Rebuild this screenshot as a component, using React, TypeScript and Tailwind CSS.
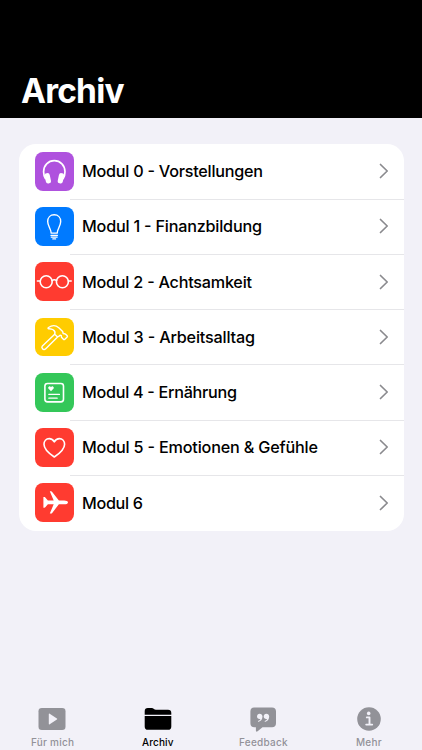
import type { ReactNode } from "react";

type Module = {
  title: string;
  color: string;
  width: string;
  icon: ReactNode;
};

const modules: Module[] = [
  {
    title: "Modul 0 - Vorstellungen",
    color: "bg-[#af52de]",
    width: "181",
    icon: (
      <>
        <path d="M10.4 26.5C9.2 24.7 8.6 22.4 8.6 19.8C8.6 13.3 13.2 8.7 19.3 8.7S30 13.3 30 19.8C30 22.4 29.4 24.7 28.2 26.5" strokeWidth="1.7" />
        <rect x="10.2" y="21.1" width="5.2" height="10.4" rx="2.4" fill="currentColor" stroke="none" transform="rotate(-12 12.8 26.3)" />
        <rect x="23.3" y="21.1" width="5.2" height="10.4" rx="2.4" fill="currentColor" stroke="none" transform="rotate(12 25.9 26.3)" />
      </>
    ),
  },
  {
    title: "Modul 1 - Finanzbildung",
    color: "bg-[#007aff]",
    width: "180",
    icon: (
      <>
        <path d="M16.2 26.1C15.9 21.5 12.7 19.2 12.7 14.5C12.7 10.6 15.4 7.8 19.2 7.8S25.7 10.6 25.7 14.5C25.7 19.2 22.5 21.5 22.2 26.1Z" strokeWidth="1.4" />
        <path d="M15.9 28.3H22.5M16.2 30.1H22.2M17.8 31.9H20.6" strokeWidth="1.2" />
      </>
    ),
  },
  {
    title: "Modul 2 - Achtsamkeit",
    color: "bg-[#ff3b30]",
    width: "170",
    icon: (
      <>
        <circle cx="11.2" cy="19.8" r="6" />
        <circle cx="27.4" cy="19.8" r="6" />
        <path d="M2.4 19H5.2M33.4 19H36.2M17 18.6C18.3 17.7 20.3 17.7 21.6 18.6" />
      </>
    ),
  },
  {
    title: "Modul 3 - Arbeitsalltag",
    color: "bg-[#ffcc00]",
    width: "173",
    icon: (
      <path
        d="M19.7 16.2L7.4 27.9C6.6 28.8 6.7 29.8 7.5 30.7C8.4 31.7 9.7 31.8 10.5 30.9L22.6 18.9M19.7 16.2C20.4 14.5 19.7 12.8 18.2 11.8C16.8 10.8 15.3 10.8 13.5 10.7C12.9 10.6 12.9 9.9 13.5 9.5C17 7.1 20.9 7.2 23.8 9.7L27.4 13.3C28.2 14.2 27.9 15 28.2 15.6C28.8 16.2 29.7 15.4 30.4 16L32.2 17.8C32.6 18.2 32.5 18.6 32.2 18.9L29.6 21.4C29.2 21.8 28.8 21.7 28.4 21.3L26.7 19.6C26.1 18.9 26.7 18.1 26.2 17.6C25.6 17.1 24.7 17.5 24.1 18.1L22.6 18.9Z"
        strokeWidth="1.4"
      />
    ),
  },
  {
    title: "Modul 4 - Ernährung",
    color: "bg-[#34c759]",
    width: "155",
    icon: (
      <>
        <rect x="9.9" y="10.5" width="18.6" height="18.4" rx="2.6" />
        <path d="M16 18.2L13.6 15.8C12.9 15 13.1 13.7 14.1 13.4C14.9 13.1 15.6 13.6 16 14.3C16.4 13.6 17.1 13.1 17.9 13.4C18.9 13.7 19.1 15 18.4 15.8Z" fill="currentColor" stroke="none" />
        <path d="M13.8 21.4H24.5M13.8 25.2H22.2" strokeWidth="1.2" />
      </>
    ),
  },
  {
    title: "Modul 5 - Emotionen & Gefühle",
    color: "bg-[#ff3b30]",
    width: "236",
    icon: (
      <path d="M19.3 29C13 24.9 9 20.7 9 16.3C9 13 11.2 10.6 14.2 10.6C16.5 10.6 18.2 11.8 19.3 13.9C20.4 11.8 22.1 10.6 24.4 10.6C27.4 10.6 29.6 13 29.6 16.3C29.6 20.7 25.6 24.9 19.3 29Z" />
    ),
  },
  {
    title: "Modul 6",
    color: "bg-[#ff3b30]",
    width: "61",
    icon: (
      <path
        d="M33 19.4C33 18.2 31.2 17.5 29.2 17.5H23.9L17.2 8.9C16.9 8.5 16.5 8.3 16 8.3H14.8L18.7 17.5H12.9L10.3 14.5C10.1 14.2 9.8 14.1 9.4 14.1H8.4V24.7H9.4C9.8 24.7 10.1 24.6 10.3 24.3L12.9 21.3H18.7L14.8 30.5H16C16.5 30.5 16.9 30.3 17.2 29.9L23.9 21.3H29.2C31.2 21.3 33 20.6 33 19.4Z"
        fill="currentColor"
        stroke="none"
      />
    ),
  },
];

const tabs = [
  {
    label: "Für mich",
    width: "43",
    icon: (
      <>
        <rect x="2.5" y="4" width="27" height="22" rx="3.3" fill="currentColor" />
        <path d="M12.8 10.2V19.8Q12.8 20.7 13.7 20.2L20.9 15.6Q21.7 15 20.9 14.5L13.7 9.8Q12.8 9.3 12.8 10.2Z" fill="#f2f1f8" />
      </>
    ),
  },
  {
    label: "Archiv",
    width: "31.5",
    icon: (
      <path
        d="M2.7 10.8V7.3C2.7 5.1 3.8 4 5.9 4H9.6C11.8 4 12.1 5.8 14 5.8H26C28.2 5.8 29.3 6.9 29.3 8.9V10.8ZM2.7 12.1H29.3V22.4C29.3 24.7 28.2 25.8 26 25.8H6C3.8 25.8 2.7 24.7 2.7 22.4Z"
        fill="currentColor"
      />
    ),
  },
  {
    label: "Feedback",
    width: "48.5",
    icon: (
      <>
        <path d="M7 3.5H25C27.6 3.5 29 4.9 29 7.5V19.2C29 21.8 27.6 23.2 25 23.2H15.5L10.6 27.3C9.7 28.1 8.9 27.7 8.9 26.6V23.2H7.4C4.8 23.2 3.4 21.8 3.4 19.2V7.5C3.4 4.9 4.8 3.5 7 3.5Z" fill="currentColor" />
        <path d="M15.5 12.6C15.5 15.3 14 17.2 11.7 17.8C10.9 18 10.7 17.1 11.4 16.8C12.5 16.4 13.2 15.7 13.4 14.9C11.4 15.4 10 14.1 10 12.5C10 11 11.1 9.8 12.6 9.8C14.3 9.8 15.5 11 15.5 12.6ZM22.2 12.6C22.2 15.3 20.7 17.2 18.4 17.8C17.6 18 17.4 17.1 18.1 16.8C19.2 16.4 19.9 15.7 20.1 14.9C18.1 15.4 16.7 14.1 16.7 12.5C16.7 11 17.8 9.8 19.3 9.8C21 9.8 22.2 11 22.2 12.6Z" fill="#f2f1f8" />
      </>
    ),
  },
  {
    label: "Mehr",
    width: "25.5",
    icon: (
      <>
        <circle cx="16" cy="15" r="11.8" fill="currentColor" />
        <circle cx="15.7" cy="9.4" r="1.8" fill="#f2f1f8" />
        <path d="M13.8 13.4H16.5V20.3M13.2 20.6H19.2" fill="none" stroke="#f2f1f8" strokeWidth="1.9" strokeLinecap="round" strokeLinejoin="round" />
      </>
    ),
  },
];

// SVG text keeps each label at its exact width regardless of font metrics
function Label({ text, width, height, baseline }: { text: string; width: string; height: number; baseline: number }) {
  return (
    <svg width={width} height={height} className="block overflow-visible">
      <text x="0" y={baseline} textLength={width} fill="currentColor">
        {text}
      </text>
    </svg>
  );
}

function ModuleRow({ module, last }: { module: Module; last: boolean }) {
  return (
    <li className="flex h-[55.28px] pl-4">
      <div className={`mt-[7.6px] size-[38.7px] shrink-0 rounded-lg text-white ${module.color}`}>
        <svg viewBox="0 0 38.7 38.7" className="size-full" fill="none" stroke="currentColor" strokeWidth="1.6" strokeLinecap="round" strokeLinejoin="round">
          {module.icon}
        </svg>
      </div>
      <div className="-ml-1 flex flex-1 flex-col">
        <div className={`flex flex-1 items-center justify-between pr-[14.5px] pl-[12.5px] text-[16.2px] font-[450] ${last ? "pb-[1.6px]" : "pb-[0.6px]"}`}>
          <Label text={module.title} width={module.width} height={20} baseline={16} />
          <svg width="10" height="16" viewBox="0 0 10 16" fill="none" stroke="#8a8a8e" strokeWidth="1.7" strokeLinecap="round" strokeLinejoin="round">
            <path d="M1.5 1.5L8.2 8L1.5 14.5" />
          </svg>
        </div>
        {!last && <div className="h-px bg-[#e6e6e9]" />}
      </div>
    </li>
  );
}

export default function App() {
  return (
    <div className="flex h-[750px] w-[422px] flex-col overflow-hidden bg-[#f2f1f8] font-['Inter','Liberation_Sans',sans-serif] text-black">
      {/* HEADER */}
      <header className="flex h-[118.4px] shrink-0 items-end bg-black pb-[9.9px] pl-[20.5px] text-white">
        <h1 className="text-[33.5px] leading-[38px] font-bold">
          <Label text="Archiv" width="103.5" height={38} baseline={31.5} />
        </h1>
      </header>

      {/* MODULES */}
      <main className="flex-1 pt-[25.9px] pr-[18.5px] pl-[19px]">
        <ul className="overflow-hidden rounded-[17px] bg-white">
          {modules.map((module, i) => (
            <ModuleRow key={module.title} module={module} last={i === modules.length - 1} />
          ))}
        </ul>
      </main>

      {/* TAB BAR */}
      <nav className="grid h-[46px] grid-cols-4">
        {tabs.map((tab) => (
          <button
            key={tab.label}
            className={`flex flex-col items-center pr-[0.8px] text-[10px] font-medium ${
              tab.label === "Archiv" ? "text-black" : "text-[#929298]"
            }`}
          >
            <svg width="32" height="29" viewBox="0 0 32 29" className="overflow-visible">
              {tab.icon}
            </svg>
            <Label text={tab.label} width={tab.width} height={14} baseline={12.5} />
          </button>
        ))}
      </nav>
    </div>
  );
}
